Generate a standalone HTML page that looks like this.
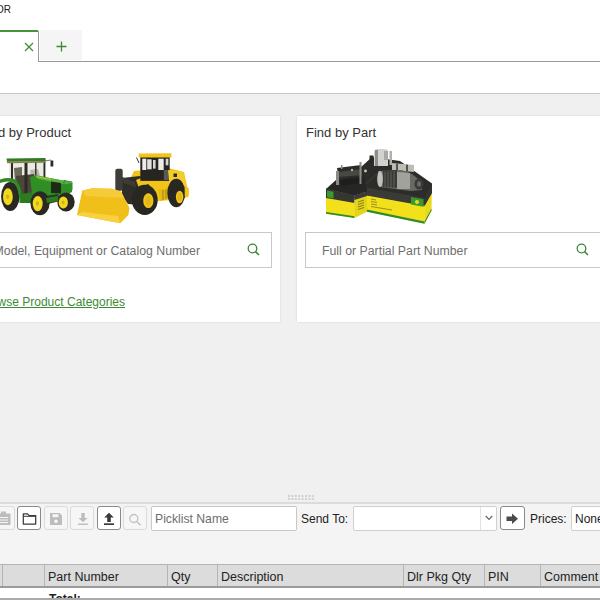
<!DOCTYPE html>
<html><head><meta charset="utf-8">
<style>
*{box-sizing:border-box;margin:0;padding:0}
html,body{width:600px;height:600px;overflow:hidden;background:#fff;font-family:"Liberation Sans",sans-serif;color:#333}
.abs{position:absolute}
#title{right:589px;top:4px;font-size:10px;color:#222;white-space:nowrap}
#tabline{left:0;top:30px;width:38px;height:2px;background:#46923a}
#tabright{left:38px;top:31px;width:1px;height:31px;background:#999}
#tabbottom{left:38px;top:61px;width:562px;height:1px;background:#999}
#plus{left:40px;top:30px;width:42px;height:30px;background:#f5f5f5}
#hdrline{left:0;top:93px;width:600px;height:1px;background:#c8c8c8}
#grey{left:0;top:94px;width:600px;height:409px;background:#f0f0f0}
.card{background:#fff;top:116px;height:206px;box-shadow:0 0 2px rgba(0,0,0,0.12)}
.ctitle{font-size:13px;color:#333;white-space:nowrap}
.inp{border:1px solid #c8c8c8;background:#fff;top:232px;height:36px}
.ph{font-size:12.3px;color:#6e6e6e;white-space:nowrap}
#panel{left:0;top:503px;width:600px;height:97px;background:#f4f4f4}
#panelline{left:0;top:502px;width:600px;height:2px;background:#dcdcdc}
.btn{top:506px;width:24px;height:24px;border:1px solid #dadada;border-radius:3px;background:#f6f6f6}
.btn.on{border-color:#8a8a8a;background:#fff}
.lbl{font-size:12px;color:#222;white-space:nowrap}
#thead{left:0;top:564px;width:600px;height:24px;background:#dcdcdc;border-top:1px solid #b4b4b4;border-bottom:2px solid #9a9a9a}
.th{top:565px;height:21px;border-left:1px solid #b4b4b4;font-size:12.5px;color:#222;padding-left:3px;line-height:25px;white-space:nowrap}
</style></head><body>
<div class="abs" id="title">Parts ADVISOR</div>
<div class="abs" id="tabline"></div>
<div class="abs" id="tabright"></div>
<div class="abs" id="plus"></div>
<div class="abs" id="tabbottom"></div>
<svg class="abs" style="left:24px;top:42px" width="10" height="10" viewBox="0 0 10 10"><path d="M1 1L9 9M9 1L1 9" stroke="#3d8a33" stroke-width="1.2"/></svg>
<svg class="abs" style="left:56px;top:41px" width="11" height="11" viewBox="0 0 11 11"><path d="M5.5 0.5V10.5M0.5 5.5H10.5" stroke="#3d8a33" stroke-width="1.3"/></svg>
<div class="abs" id="hdrline"></div>
<div class="abs" id="grey"></div>

<div class="abs card" style="left:-20px;width:300px"></div>
<div class="abs card" style="left:297px;width:320px"></div>
<svg class="abs" style="left:0;top:140px" width="200" height="95" viewBox="0 140 200 95">
<!-- tractor -->
<g>
 <rect x="9" y="162" width="37" height="19" fill="#eaeae4"/>
 <path d="M14 168 L22 167 L22 182 L15 182Z" fill="#6e6a5a"/>
 <path d="M30 170 L38 169 L40 176 L31 177Z" fill="#b8b6a8"/>
 <path d="M16 176 L34 174 L34 196 L18 196Z" fill="#4a463a"/>
 <rect x="11" y="162" width="2" height="20" fill="#2b2b24"/>
 <rect x="24.5" y="162" width="3" height="36" fill="#2b2b24"/>
 <rect x="35" y="162" width="1.5" height="14" fill="#3a3a30"/>
 <rect x="43.5" y="162" width="1.8" height="15" fill="#2b2b24"/>
 <path d="M6.5 158.5 L45.5 158 L45.8 161.3 L7 161.8Z" fill="#2f7d22"/>
 <path d="M7 161.5 L45.5 161 L45.5 162.8 L7 163.2Z" fill="#8a7a50"/>
 <rect x="50.5" y="160.5" width="2.8" height="6" fill="#2b2b24"/>
 <path d="M45 161 L51 160" stroke="#555" stroke-width="0.8"/>
 <ellipse cx="10.3" cy="196.5" rx="9.2" ry="14.4" fill="#2a2822"/>
 <ellipse cx="7.9" cy="196.8" rx="4.9" ry="8.5" fill="#f2d81e"/>
 <ellipse cx="7.6" cy="196.8" rx="1.5" ry="2.4" fill="#d0b414"/>
 <path d="M0 179.5 Q10 176.5 16 180 Q22 186 22.5 203 L19.5 203 Q19 189 14 183 Q8 180 0 183Z" fill="#2f8a24"/>
 <path d="M20 194 L34 192 L34 203 L22 203Z" fill="#2c7a22"/>
 <path d="M30 177 L35.3 175.3 L64 180.7 L72 183 L72 192 L64 196 L50 199 L40 196 L32 194Z" fill="#2f8f25"/>
 <path d="M35.3 175.3 L64 180.7 L72 183 L64 184.5 L38 179Z" fill="#58ae40"/>
 <path d="M36 176.7 L51 179.5" stroke="#e3d21a" stroke-width="0.7"/>
 <path d="M51 181.5 L61 183 L61 193.5 L51 193Z" fill="#1f2a18"/>
 <path d="M46 196 L58 194 L60 201 L48 204Z" fill="#2a3a22"/>
 <path d="M64 180.5 L72 182 L72 190 L64 190Z" fill="none" stroke="#2f8a24" stroke-width="1"/>
 <ellipse cx="40" cy="203.3" rx="9.6" ry="12" fill="#2a2822"/>
 <ellipse cx="37.7" cy="203.6" rx="5" ry="7.6" fill="#f2d81e"/>
 <ellipse cx="37.4" cy="203.6" rx="1.6" ry="2.4" fill="#d0b414"/>
 <ellipse cx="66" cy="202" rx="8.7" ry="9.4" fill="#2a2822"/>
 <ellipse cx="63.3" cy="202.6" rx="4.6" ry="6" fill="#f2d81e"/>
 <ellipse cx="63.1" cy="202.6" rx="1.4" ry="2" fill="#d0b414"/>
 <path d="M46 198 L58 196 L58 201 L47 203Z" fill="#2c7a22"/>
</g>
<!-- loader -->
<g>
 <path d="M134 171 L168 168 L184 172 L187 186 L188.5 190 L188.5 197 L172 200 L158 201 L140 203 L130 196 L128 183Z" fill="#f2c418"/>
 <path d="M122 178 L140 176 L150 186 L142 205 L128 204 L122 196Z" fill="#2e2d28"/>
 <path d="M117 175 L135 182 L136 187 L120 182Z" fill="#3c3b35"/>
 <rect x="115.3" y="168.7" width="7.4" height="22" rx="2" fill="#3e3d38"/>
 <path d="M136 180 L146 176 L150 183 L139 188Z" fill="#f0c21a"/>
 <rect x="140.3" y="156.3" width="29.4" height="24.6" fill="#262522"/>
 <rect x="142.3" y="158.7" width="4" height="11.3" fill="#ecece8"/>
 <rect x="147.2" y="159.3" width="4.4" height="10" fill="#e4e4de"/>
 <rect x="153" y="160" width="2.6" height="8.6" fill="#d8d8d0"/>
 <rect x="158.3" y="158.7" width="5.4" height="11.3" fill="#ecece8"/>
 <rect x="165.7" y="158.7" width="2.7" height="6.6" fill="#d8d8d0"/>
 <rect x="163.8" y="170" width="5.6" height="10" fill="#5a5952"/>
 <path d="M136.5 157.5 L139 163" stroke="#333" stroke-width="1"/>
 <path d="M138.7 153.6 L171.3 153.3 L171.5 157.5 L138.7 157.5Z" fill="#f2c418"/>
 <path d="M168 170 L183 172 L186 185 L170 188Z" fill="#f5cd2a"/>
 <rect x="173.5" y="173.5" width="3.5" height="3.5" fill="#2a2a26"/>
 <path d="M158 190 L170 188 L170 198 L160 201Z" fill="#e8b814"/>
 <path d="M163 190 L163 200 M166 189.5 L166 199" stroke="#7c6a20" stroke-width="0.7"/>
 <ellipse cx="144.8" cy="199.9" rx="12.9" ry="15.1" fill="#282722"/>
 <ellipse cx="148.3" cy="200.7" rx="5.1" ry="7.4" fill="#f2c418"/>
 <ellipse cx="148.5" cy="200.7" rx="3" ry="4.8" fill="#e2b818"/>
 <ellipse cx="176.3" cy="193" rx="9" ry="14.3" fill="#282722"/>
 <ellipse cx="179.6" cy="197" rx="3.7" ry="6.3" fill="#f2c418"/>
 <ellipse cx="179.8" cy="197" rx="2.2" ry="4" fill="#e2b818"/>
 <rect x="184.7" y="188" width="4" height="8" fill="#f2c418"/>
 <path d="M82.3 190.5 L92.2 188.2 L112 188.75 L121.3 191.7 L124.8 198.7 L129.5 208 L128.3 215 L120.2 223.2 L77 215Z" fill="#f0bf1a"/>
 <path d="M82.3 190.5 L92.2 188.2 L112 188.75 L121.3 191.7 L124 198 L86 196Z" fill="#f6cb3a"/>
 <path d="M77 215 L82 212 L118 216 L120.2 223.2Z" fill="#f8d040"/>
</g>
</svg>
<div class="abs ctitle" style="right:529px;top:125px">Find by Product</div>
<svg class="abs" style="left:320px;top:140px" width="120" height="90" viewBox="320 140 120 90">
<!-- right box -->
<path d="M360 168 L372 157 L400 161 L432 183.5 L432 193 L424.5 206 L366.75 195.5Z" fill="#2c2c2a"/>
<path d="M366.75 195 L424.5 205.5 L424.5 223.5 L366.75 211.5Z" fill="#f1e01a"/>
<path d="M366.75 187.5 L424.5 198 L424.5 206 L366.75 195.5Z" fill="#3a3a36"/>
<path d="M366.75 209.5 L424.5 221.5 L424.5 223.7 L366.75 211.7Z" fill="#2e8a2a"/>
<path d="M411 197 L423.5 199.3 L423.5 206.8 L411 204.5Z" fill="#3a9a30"/>
<circle cx="417" cy="202" r="2" fill="#e8d820"/>
<path d="M424.3 205.8 L431.8 192 L431.5 210.5 L424.3 223.5Z" fill="#e9da18"/>
<path d="M424.3 198.3 L432 183.5 L432 193 L424.3 206.5Z" fill="#333330"/>
<path d="M424.5 221.5 L431.5 208.5 L431.5 210.5 L424.5 223.7Z" fill="#2e8a2a"/>
<path d="M371 199 L376 200 M371 201.5 L377 202.5 M371 204 L377 205 M371 206.5 L392 210" stroke="#5a5a20" stroke-width="0.6"/>
<!-- upper starter parts -->
<path d="M374 152 Q374 149 378 149 L385 149 Q388 149 388 152 L388 166 L374 166Z" fill="#d2d2ce"/>
<path d="M375 150 L378 150 L378 166 L375 166Z" fill="#8e8e8a"/>
<path d="M384 151 L388 151 L388 160 L384 160Z" fill="#a8a8a4"/>
<rect x="369.5" y="155.5" width="4" height="7" fill="#2a2a28"/>
<rect x="389.5" y="151" width="2.5" height="14" fill="#b0b0ac"/>
<path d="M392 163 L414 165 L414 172 L392 170Z" fill="#bdbdb6"/>
<path d="M396 163.5 L398 163.7 L398 170.3 L396 170Z" fill="#55544c"/>
<path d="M406 164.5 L408 164.7 L408 171.3 L406 171Z" fill="#55544c"/>
<!-- lower starter -->
<path d="M378 171 L402 170 L412 174 L417 178 L422 182 L422 190 L410 191 L395 189 L380 187Z" fill="#6a6964"/>
<ellipse cx="380" cy="179" rx="2.8" ry="8" fill="#c0c0bc"/>
<path d="M383 171 L397 170 L397 188 L383 187Z" fill="#3a3936"/>
<path d="M385 172 L385 187 M388 171.5 L388 187.5 M391 171.5 L391 188 M394 171 L394 188" stroke="#6a6964" stroke-width="0.8"/>
<path d="M397 172 L410 173 L410 189 L397 189Z" fill="#a2a29c"/>
<ellipse cx="419" cy="184" rx="4.5" ry="5.5" fill="#393936"/>
<ellipse cx="419" cy="184" rx="2" ry="2.8" fill="#6a6a64"/>
<path d="M356 193 L377 174" stroke="#3a3a36" stroke-width="1.2"/>
<!-- left box -->
<path d="M326 189 L336 180 L364 176 L367 191.5 L354.7 195.7Z" fill="#262624"/>
<path d="M326 197.5 L354.7 202.5 L354.7 218 L326 213.7Z" fill="#f1e01a"/>
<path d="M326 188.5 L354.7 195.2 L354.7 203 L326 198Z" fill="#353532"/>
<path d="M326 212 L354.7 216.3 L354.7 218 L326 213.7Z" fill="#2e8a2a"/>
<path d="M327 190.5 L333.5 191.8 L333.5 198.5 L327 197.3Z" fill="#3a9a30"/>
<path d="M354.4 199.5 L367 195.5 L367 211.7 L354.4 218Z" fill="#e3d418"/>
<path d="M354.4 195.4 L367 191.2 L367 196 L354.4 200Z" fill="#3a3a36"/>
<path d="M358 202 L364 200 M358 204.5 L364 202.5 M358 207 L364 205 M358 209.5 L364 207.5" stroke="#5a5a20" stroke-width="0.7"/>
<!-- left starter -->
<path d="M337 168 L361 165 L364 183 L340 186Z" fill="#2b2b29"/>
<path d="M338 172 L362 169 L362 175 L339 177Z" fill="#474744"/>
<path d="M340 180 L362 177 L363 183 L341 186Z" fill="#1e1e1c"/>
<rect x="336" y="171" width="3" height="14" fill="#8a8a86"/>
<rect x="359.5" y="162" width="2" height="22" fill="#8a8a86"/>
<rect x="341" y="165" width="1.5" height="4" fill="#8a8a86"/>
<circle cx="352" cy="170" r="1.2" fill="#c8b070"/>
<circle cx="365.5" cy="171" r="1.4" fill="#d8c8a8"/>
</svg>
<div class="abs ctitle" style="left:306px;top:125px">Find by Part</div>
<div class="abs inp" style="left:-20px;width:292px"></div>
<div class="abs inp" style="left:305px;width:320px"></div>
<div class="abs ph" style="right:400px;top:244px">Model, Equipment or Catalog Number</div>
<div class="abs ph" style="left:322px;top:244px">Full or Partial Part Number</div>
<svg class="abs" style="left:247px;top:243px" width="13" height="13" viewBox="0 0 13 13"><circle cx="5.5" cy="5.5" r="4.3" fill="none" stroke="#3a8a35" stroke-width="1.3"/><path d="M8.6 8.6L12 12" stroke="#3a8a35" stroke-width="1.5"/></svg>
<svg class="abs" style="left:576px;top:243px" width="13" height="13" viewBox="0 0 13 13"><circle cx="5.5" cy="5.5" r="4.3" fill="none" stroke="#3a8a35" stroke-width="1.3"/><path d="M8.6 8.6L12 12" stroke="#3a8a35" stroke-width="1.5"/></svg>
<div class="abs" style="right:475px;top:295px;font-size:12px;color:#3d8a36;text-decoration:underline;white-space:nowrap">Browse Product Categories</div>

<div class="abs" id="panel"></div>
<div class="abs" id="panelline"></div>
<svg class="abs" style="left:288px;top:495px" width="28" height="5" viewBox="0 0 28 5"><rect x="0.0" y="0" width="2" height="2" fill="#d0d0d0"/><rect x="0.0" y="3" width="2" height="2" fill="#d0d0d0"/><rect x="3.4" y="0" width="2" height="2" fill="#d0d0d0"/><rect x="3.4" y="3" width="2" height="2" fill="#d0d0d0"/><rect x="6.8" y="0" width="2" height="2" fill="#d0d0d0"/><rect x="6.8" y="3" width="2" height="2" fill="#d0d0d0"/><rect x="10.2" y="0" width="2" height="2" fill="#d0d0d0"/><rect x="10.2" y="3" width="2" height="2" fill="#d0d0d0"/><rect x="13.6" y="0" width="2" height="2" fill="#d0d0d0"/><rect x="13.6" y="3" width="2" height="2" fill="#d0d0d0"/><rect x="17.0" y="0" width="2" height="2" fill="#d0d0d0"/><rect x="17.0" y="3" width="2" height="2" fill="#d0d0d0"/><rect x="20.4" y="0" width="2" height="2" fill="#d0d0d0"/><rect x="20.4" y="3" width="2" height="2" fill="#d0d0d0"/><rect x="23.8" y="0" width="2" height="2" fill="#d0d0d0"/><rect x="23.8" y="3" width="2" height="2" fill="#d0d0d0"/></svg>


<div class="abs btn" style="left:-9px"></div>
<div class="abs btn on" style="left:17px"></div>
<div class="abs btn" style="left:44px"></div>
<div class="abs btn" style="left:70px"></div>
<div class="abs btn on" style="left:97px"></div>
<div class="abs btn" style="left:123px"></div>
<div class="abs" style="left:151px;top:506px;width:146px;height:25px;border:1px solid #c8c8c8;border-radius:2px;background:#fff"></div>
<div class="abs ph" style="left:155px;top:512px;font-size:12.2px">Picklist Name</div>
<div class="abs lbl" style="left:301px;top:512px">Send To:</div>
<div class="abs" style="left:353px;top:506px;width:144px;height:25px;border:1px solid #d0d0d0;border-radius:2px;background:#fff"></div>
<div class="abs btn on" style="left:500px;width:25px"></div>
<div class="abs lbl" style="left:530px;top:512px">Prices:</div>
<div class="abs" style="left:571px;top:506px;width:40px;height:25px;border:1px solid #d0d0d0;border-radius:2px;background:#fff"></div>
<div class="abs lbl" style="left:575px;top:512px">None</div>


<svg class="abs" style="left:0;top:511px" width="11" height="15" viewBox="0 0 11 15"><path d="M-1 2.5H10.5V14H-1Z" fill="#bdbdbd"/><rect x="1" y="0.5" width="5" height="3" fill="#bdbdbd"/><path d="M0 6.5H8M0 9H8M0 11.5H8" stroke="#f4f4f4" stroke-width="1.1"/></svg>
<svg class="abs" style="left:22px;top:512px" width="15" height="14" viewBox="0 0 15 14"><path d="M1.3 1.9H5.6L7.1 3.6H13.7V12.1H1.3Z" fill="none" stroke="#3a3a3a" stroke-width="1.25" stroke-linejoin="round"/><path d="M1.3 4.3H13.7" stroke="#3a3a3a" stroke-width="1"/></svg>
<svg class="abs" style="left:49px;top:512px" width="14" height="14" viewBox="0 0 14 14"><path d="M1 1H10.5L13 3.5V13H1Z" fill="#bdbdbd"/><rect x="3.5" y="2.2" width="6" height="3" fill="#f6f6f6"/><circle cx="7" cy="9.3" r="1.8" fill="#f6f6f6"/></svg>
<svg class="abs" style="left:77px;top:512px" width="12" height="14" viewBox="0 0 12 14"><path d="M4.3 1H7.7V6H10.5L6 10.3L1.5 6H4.3Z" fill="#bdbdbd"/><rect x="1" y="11.5" width="10" height="1.4" fill="#bdbdbd"/></svg>
<svg class="abs" style="left:103px;top:512px" width="12" height="14" viewBox="0 0 12 14"><path d="M6 0.8L10.8 5.5H7.8V10H4.2V5.5H1.2Z" fill="#3a3a3a"/><rect x="1" y="11.3" width="10" height="1.7" fill="#3a3a3a"/></svg>
<svg class="abs" style="left:128px;top:513px" width="14" height="13" viewBox="0 0 14 13"><circle cx="5.8" cy="5.5" r="4" fill="none" stroke="#c4c4c4" stroke-width="1.4"/><path d="M8.8 8.5L12.5 12.2" stroke="#c4c4c4" stroke-width="1.6"/></svg>
<div class="abs" style="left:480px;top:507px;width:1px;height:23px;background:#e2e2e2"></div>
<svg class="abs" style="left:485px;top:515px" width="8" height="6" viewBox="0 0 8 6"><path d="M0.7 1L4 4.5L7.3 1" fill="none" stroke="#666" stroke-width="1.2"/></svg>
<svg class="abs" style="left:506px;top:513px" width="13" height="12" viewBox="0 0 13 12"><path d="M0.5 3.5H6V0.5L12 5.8L6 11V8H0.5Z" fill="#4a4a4a"/></svg>
<div class="abs" id="thead"></div>
<div class="abs th" style="left:2px;width:43px"></div>
<div class="abs th" style="left:44px;width:124px">Part Number</div>
<div class="abs th" style="left:167px;width:51px">Qty</div>
<div class="abs th" style="left:217px;width:186px">Description</div>
<div class="abs th" style="left:403px;width:82px">Dlr Pkg Qty</div>
<div class="abs th" style="left:484px;width:57px">PIN</div>
<div class="abs th" style="left:540px;width:70px">Comment</div>
<div class="abs" style="left:0;top:588px;width:600px;height:10px;background:#fff"></div>
<div class="abs" style="left:49px;top:592px;font-size:12px;font-weight:bold;color:#222;white-space:nowrap">Total:</div>
<div class="abs" style="left:0;top:598px;width:600px;height:2px;background:#aaa"></div>
</body></html>
